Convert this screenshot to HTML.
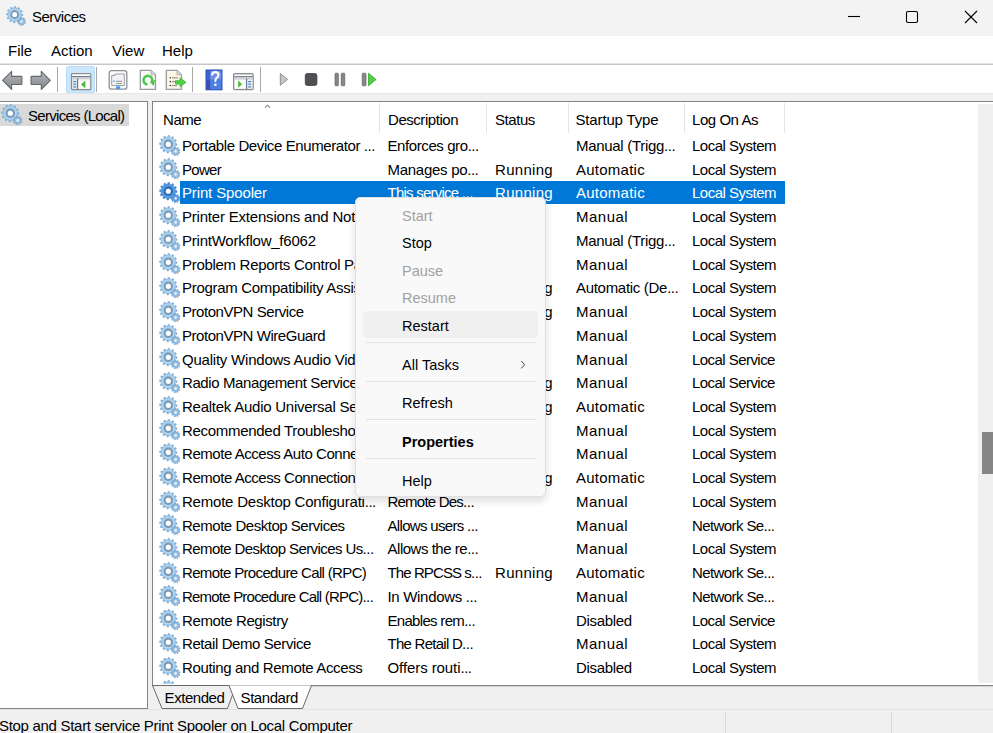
<!DOCTYPE html>
<html><head><meta charset="utf-8"><style>
*{margin:0;padding:0;box-sizing:border-box}
html,body{width:993px;height:733px;overflow:hidden;background:#f0f0f0;font-family:"Liberation Sans",sans-serif;color:#000}
.a{position:absolute}
#title{left:0;top:0;width:993px;height:36px;background:#f3f3f3}
#menubar{left:0;top:36px;width:993px;height:27px;background:#fff}
#menubar span{position:absolute;top:0px;font-size:15px;line-height:29px}
#tbline{left:0;top:63px;width:993px;height:2px;background:#c6c6c6;border-top:1px solid #e2e2e2}
#toolbar{left:0;top:65px;width:993px;height:28px;background:#fff}
.sep{position:absolute;top:2px;width:1px;height:25px;background:#a0a0a0}
#left{left:0;top:101px;width:148px;height:608px;background:#fff;border-top:1px solid #7e848c;border-right:1px solid #7e848c;border-bottom:1px solid #7e848c;box-shadow:0 1px 0 #d4d4d4}
#right{left:152px;top:101px;width:841px;height:585px;background:#fff;border-top:1px solid #7e848c;border-left:1px solid #7e848c;border-bottom:1px solid #7e848c;overflow:hidden;box-shadow:0 1px 0 #d4d4d4}
.row{position:absolute;left:0;width:993px;height:23.73px;font-size:15px;letter-spacing:-0.45px;line-height:23.73px;white-space:nowrap}
.row .c{position:absolute;top:0}
.row.sel{color:#fff}
.row .run{letter-spacing:0.3px}
.el{letter-spacing:-0.5px}
.row .selbg{position:absolute;left:180px;top:0;width:605px;height:23px;background:#0078d7}
svg.g{position:absolute;overflow:visible}
#list{position:absolute;left:0;top:0;width:993px;height:733px;overflow:hidden;clip-path:polygon(153px 102px,978px 102px,978px 684px,153px 684px)}
.hdr{position:absolute;top:104.5px;font-size:15px;letter-spacing:-0.45px;line-height:30px}
.cdiv{position:absolute;top:103px;width:1px;height:30px;background:#e5e5e5}
#scroll{left:978px;top:104px;width:15px;height:579px;background:#f0f0f0}
#thumb{left:982px;top:432px;width:11px;height:42px;background:#858585}
#status{left:0;top:709px;width:993px;height:24px;background:#f0f0f0;border-top:1px solid #e3e3e3}
#menu{left:355px;top:197px;width:191px;height:299.5px;background:#f9f9f9;border:1px solid #e0e0e0;border-radius:5px;box-shadow:0 4px 9px rgba(0,0,0,0.14)}
#menu .mi{position:absolute;left:46px;font-size:14.5px;line-height:20px;white-space:nowrap}
#menu .dis{color:#a2a2a2}
#menu .msep{position:absolute;left:10px;width:170px;height:1px;background:#e3e3e3}
</style></head><body>
<svg width="0" height="0" style="position:absolute">
<defs>
<radialGradient id="gb" cx="10.3" cy="9.2" r="8.8" gradientUnits="userSpaceOnUse"><stop offset="0" stop-color="#e2f2fd"/><stop offset="0.45" stop-color="#cbe6fa"/><stop offset="0.75" stop-color="#9ecbee"/><stop offset="1" stop-color="#6f9fcc"/></radialGradient>
<radialGradient id="gbs" cx="10.3" cy="9.2" r="8.8" gradientUnits="userSpaceOnUse"><stop offset="0" stop-color="#7cb8ee"/><stop offset="0.6" stop-color="#5aa0e6"/><stop offset="1" stop-color="#3a80d0"/></radialGradient>
<g id="gear"><path d="M17.46,8.48 L19.09,8.87 L19.00,10.53 L17.34,10.73 L16.86,12.16 L18.08,13.31 L17.17,14.70 L15.63,14.04 L14.50,15.04 L14.98,16.65 L13.50,17.40 L12.49,16.06 L11.02,16.36 L10.63,17.99 L8.97,17.90 L8.77,16.24 L7.34,15.76 L6.19,16.98 L4.80,16.07 L5.46,14.53 L4.46,13.40 L2.85,13.88 L2.10,12.40 L3.44,11.39 L3.14,9.92 L1.51,9.53 L1.60,7.87 L3.26,7.67 L3.74,6.24 L2.52,5.09 L3.43,3.70 L4.97,4.36 L6.10,3.36 L5.62,1.75 L7.10,1.00 L8.11,2.34 L9.58,2.04 L9.97,0.41 L11.63,0.50 L11.83,2.16 L13.26,2.64 L14.41,1.42 L15.80,2.33 L15.14,3.87 L16.14,5.00 L17.75,4.52 L18.50,6.00 L17.16,7.01Z" fill="url(#gb)" stroke="#7fa9d0" stroke-width="0.4"/><circle cx="10.3" cy="9.2" r="3.7" fill="none" stroke="#7d9bb8" stroke-width="2.3"/><circle cx="10.3" cy="9.2" r="2.5" fill="#fff"/><path d="M20.88,17.06 L21.87,17.63 L21.43,18.64 L20.34,18.31 L19.71,18.98 L20.09,20.06 L19.11,20.55 L18.48,19.59 L17.57,19.70 L17.17,20.77 L16.10,20.52 L16.23,19.38 L15.47,18.87 L14.47,19.44 L13.81,18.56 L14.65,17.77 L14.39,16.89 L13.26,16.69 L13.33,15.59 L14.47,15.52 L14.84,14.68 L14.10,13.80 L14.86,13.00 L15.78,13.68 L16.60,13.27 L16.60,12.13 L17.70,12.00 L17.96,13.11 L18.86,13.33 L19.60,12.45 L20.52,13.06 L20.00,14.09 L20.55,14.82 L21.68,14.63 L21.99,15.69 L20.94,16.14Z" fill="#95bde0" stroke="#6d98c0" stroke-width="0.6"/><circle cx="17.65" cy="16.4" r="1.3" fill="#e8f3fb"/></g>
<g id="gears"><path d="M17.46,8.48 L19.09,8.87 L19.00,10.53 L17.34,10.73 L16.86,12.16 L18.08,13.31 L17.17,14.70 L15.63,14.04 L14.50,15.04 L14.98,16.65 L13.50,17.40 L12.49,16.06 L11.02,16.36 L10.63,17.99 L8.97,17.90 L8.77,16.24 L7.34,15.76 L6.19,16.98 L4.80,16.07 L5.46,14.53 L4.46,13.40 L2.85,13.88 L2.10,12.40 L3.44,11.39 L3.14,9.92 L1.51,9.53 L1.60,7.87 L3.26,7.67 L3.74,6.24 L2.52,5.09 L3.43,3.70 L4.97,4.36 L6.10,3.36 L5.62,1.75 L7.10,1.00 L8.11,2.34 L9.58,2.04 L9.97,0.41 L11.63,0.50 L11.83,2.16 L13.26,2.64 L14.41,1.42 L15.80,2.33 L15.14,3.87 L16.14,5.00 L17.75,4.52 L18.50,6.00 L17.16,7.01Z" fill="url(#gbs)" stroke="#3d7fcc" stroke-width="0.4"/><circle cx="10.3" cy="9.2" r="3.7" fill="none" stroke="#2f6cb8" stroke-width="2.3"/><circle cx="10.3" cy="9.2" r="2.5" fill="#fff"/><path d="M20.88,17.06 L21.87,17.63 L21.43,18.64 L20.34,18.31 L19.71,18.98 L20.09,20.06 L19.11,20.55 L18.48,19.59 L17.57,19.70 L17.17,20.77 L16.10,20.52 L16.23,19.38 L15.47,18.87 L14.47,19.44 L13.81,18.56 L14.65,17.77 L14.39,16.89 L13.26,16.69 L13.33,15.59 L14.47,15.52 L14.84,14.68 L14.10,13.80 L14.86,13.00 L15.78,13.68 L16.60,13.27 L16.60,12.13 L17.70,12.00 L17.96,13.11 L18.86,13.33 L19.60,12.45 L20.52,13.06 L20.00,14.09 L20.55,14.82 L21.68,14.63 L21.99,15.69 L20.94,16.14Z" fill="#5b9de0" stroke="#3a7cc8" stroke-width="0.4"/><circle cx="17.65" cy="16.4" r="1.3" fill="#cfe5fa"/></g>
</defs></svg>

<div id="title" class="a">
 <svg class="g" style="left:5.2px;top:5.6px;width:18.8px;height:18.8px" viewBox="0 0 20 20"><use href="#gear"/></svg>
 <span class="a" style="left:32px;top:0;font-size:15px;letter-spacing:-0.5px;line-height:34px">Services</span>
 <svg class="a" style="left:840px;top:0" width="153" height="35">
  <line x1="8" y1="16.5" x2="20" y2="16.5" stroke="#000" stroke-width="1.1"/>
  <rect x="66.5" y="11.5" width="11" height="11" rx="1.5" fill="none" stroke="#000" stroke-width="1.1"/>
  <path d="M125,11 L137,23 M137,11 L125,23" stroke="#000" stroke-width="1.1"/>
 </svg>
</div>
<div id="menubar" class="a">
 <span style="left:8px">File</span><span style="left:51px">Action</span><span style="left:112px">View</span><span style="left:162px">Help</span>
</div>
<div id="tbline" class="a"></div>
<div id="toolbar" class="a">
<div class="a" style="left:0;top:28px;width:993px;height:1px;background:#e8e8e8"></div>
<svg class="a" style="left:0;top:0" width="400" height="28" viewBox="0 0 400 28">
 <defs>
  <linearGradient id="ag" x1="0" y1="0" x2="0" y2="1"><stop offset="0" stop-color="#b9bcc0"/><stop offset="0.5" stop-color="#9a9da1"/><stop offset="1" stop-color="#85888c"/></linearGradient>
 </defs>
 <path d="M2.6,15.3 L11.6,6.4 L11.6,11.4 L21.2,11.4 Q21.9,11.4 21.9,12.1 L21.9,18.9 Q21.9,19.5 21.2,19.5 L11.6,19.5 L11.6,24.4 Z" fill="url(#ag)" stroke="#646668" stroke-width="1.1" stroke-linejoin="round"/>
 <path d="M50.3,15.3 L41.3,6.4 L41.3,11.4 L31.7,11.4 Q31,11.4 31,12.1 L31,18.9 Q31,19.5 31.7,19.5 L41.3,19.5 L41.3,24.4 Z" fill="url(#ag)" stroke="#646668" stroke-width="1.1" stroke-linejoin="round"/>
 <rect x="57" y="2" width="1" height="25" fill="#a8a8a8"/>
 <rect x="66.5" y="1.5" width="28" height="26.5" rx="2" fill="#cce6fa" stroke="#b3dbf7" stroke-width="1"/>
 <g transform="translate(71,8)">
  <rect x="0.5" y="0.5" width="19.3" height="16.2" rx="1" fill="#e8e8e8" stroke="#8a8c90" stroke-width="1.2"/>
  <rect x="1.5" y="1.8" width="17.5" height="1.2" fill="#fafafa"/>
  <rect x="1.2" y="3.1" width="18" height="1.1" fill="#5e6f84"/>
  <rect x="1.2" y="4.2" width="18" height="2.2" fill="#cdd0d4"/>
  <rect x="6" y="5.5" width="1.3" height="10.7" fill="#6c7c90"/>
  <rect x="7.5" y="6.6" width="11.3" height="9.2" fill="#fafafa"/>
  <rect x="1.6" y="6.6" width="4.2" height="9.2" fill="#e6e8ea"/>
  <rect x="2.2" y="8" width="3.1" height="1.3" rx="0.6" fill="#4a86c8"/>
  <rect x="2.2" y="10.6" width="3.1" height="1.3" rx="0.6" fill="#6a9ad0"/>
  <rect x="2.2" y="13.2" width="3.1" height="1.3" rx="0.6" fill="#4a86c8"/>
  <path d="M10,11.5 L14.3,7.6 L14.3,15.2 Z" fill="#48b838"/>
 </g>
 <rect x="96" y="2" width="1" height="25" fill="#a8a8a8"/>
 <g transform="translate(108.5,5)">
  <rect x="0.7" y="0.7" width="17.6" height="18.5" rx="2.2" fill="#fbfbfb" stroke="#8a8f96" stroke-width="1.3"/>
  <rect x="3" y="10.2" width="13" height="0" fill="none"/>
  <path d="M3.2,5.5 L6.5,5.5 L6.5,4 L15.8,4 L15.8,15.5 L3.2,15.5 Z" fill="#f4f4f4" stroke="#9a9ea4" stroke-width="1"/>
  <rect x="4.6" y="10.6" width="1.8" height="1.3" rx="0.6" fill="#3b9be8"/>
  <rect x="7.6" y="10.8" width="6" height="1" fill="#8a8a8a"/>
  <rect x="7.6" y="13" width="6" height="1" fill="#9a9a9a"/>
  <rect x="7.5" y="16.3" width="4.3" height="2.6" rx="1" fill="#3d9cf0"/>
 </g>
 <g transform="translate(139.5,4.5)">
  <path d="M0.8,0.8 L11.5,0.8 L16,5.3 L16,19.8 L0.8,19.8 Z" fill="#fafafa" stroke="#9a9c9e" stroke-width="1.3"/>
  <path d="M11.5,0.8 L11.5,5.3 L16,5.3" fill="#d8d8d8" stroke="#a8a8a8" stroke-width="0.8"/>
  <path d="M12.4,12.6 A4.4,4.4 0 1 0 7.9,15.1" fill="none" stroke="#4cc544" stroke-width="2.5"/>
  <path d="M10.2,12.2 L15.6,10.6 L14.2,16.6 Z" fill="#4cc544"/>
 </g>
 <g transform="translate(165.5,4.5)">
  <path d="M0.8,0.8 L11.5,0.8 L16,5.3 L16,19.8 L0.8,19.8 Z" fill="#fcf6e2" stroke="#9a9c9e" stroke-width="1.3"/>
  <path d="M11.5,0.8 L11.5,5.3 L16,5.3" fill="#d8d8d8" stroke="#a8a8a8" stroke-width="0.8"/>
  <circle cx="4.8" cy="8.3" r="0.8" fill="#333"/><circle cx="4.8" cy="12.1" r="0.8" fill="#333"/><circle cx="4.8" cy="16" r="0.8" fill="#333"/>
  <rect x="6.5" y="7.8" width="6" height="1.1" fill="#8c8f96"/><rect x="6.5" y="11.6" width="5" height="1.1" fill="#8c8f96"/><rect x="6.5" y="15.5" width="5" height="1.1" fill="#8c8f96"/>
  <path d="M10,11.2 L14.5,11.2 L14.5,8.4 L20.5,12.8 L14.5,17.2 L14.5,14.6 L10,14.6 Z" fill="#52d04a" stroke="#3cb534" stroke-width="0.8" stroke-linejoin="round"/>
 </g>
 <rect x="192" y="2" width="1" height="25" fill="#a8a8a8"/>
 <g transform="translate(205.5,4.5)">
  <rect x="0.5" y="0.5" width="16" height="19.8" fill="#3b62d6" stroke="#2f4fb8" stroke-width="1"/>
  <rect x="4.6" y="1.3" width="11.2" height="9" fill="#6f8ee6"/>
  <rect x="4.6" y="10.3" width="11.2" height="9.2" fill="#4a7fe0"/>
  <rect x="1" y="11" width="3.5" height="9" fill="#3e4ea8"/>
  <path d="M6.6,5.2 Q7,2.6 10,2.6 Q13,2.6 13,5.4 Q13,7.2 11.2,8.4 Q9.9,9.3 9.9,11.5" fill="none" stroke="#fff" stroke-width="2.1" stroke-linecap="round"/>
  <circle cx="9.9" cy="15.2" r="1.3" fill="#fff"/>
 </g>
 <g transform="translate(233,8)">
  <rect x="0.6" y="0.6" width="19.6" height="16" rx="1" fill="#e6e6e6" stroke="#8a8c90" stroke-width="1.2"/>
  <rect x="1.6" y="1.9" width="17.5" height="1.2" fill="#fafafa"/>
  <rect x="1.2" y="3.2" width="18.5" height="1.1" fill="#5e6f84"/>
  <rect x="1.2" y="4.3" width="18.5" height="2.2" fill="#cdd0d4"/>
  <rect x="13" y="5.5" width="1.3" height="10.7" fill="#6c7c90"/>
  <rect x="1.8" y="6.8" width="10.8" height="8.8" fill="#fafafa"/>
  <rect x="14.5" y="6.8" width="4.8" height="8.8" fill="#f2f2f2"/>
  <rect x="15" y="8" width="3.3" height="1.3" rx="0.6" fill="#4a86c8"/>
  <rect x="15" y="10.6" width="3.3" height="1.3" rx="0.6" fill="#6a9ad0"/>
  <rect x="15" y="13.2" width="3.3" height="1.3" rx="0.6" fill="#4a86c8"/>
  <path d="M5.2,7.6 L9,11.2 L5.2,14.8 Z" fill="#48b838"/>
 </g>
 <rect x="260" y="2" width="1" height="25" fill="#a8a8a8"/>
 <path d="M280.3,8.6 L287.6,14.4 L280.3,20.3 Z" fill="#c4c6c8" stroke="#8c8e90" stroke-width="1" stroke-linejoin="round"/>
 <rect x="305.3" y="8.6" width="11.6" height="11.8" rx="2" fill="#4e5054" stroke="#3a3a3a" stroke-width="0.8"/>
 <rect x="335" y="8.2" width="3.4" height="12.6" rx="0.8" fill="#85878b" stroke="#626466" stroke-width="0.7"/>
 <rect x="341.2" y="8.2" width="3.6" height="12.6" rx="0.8" fill="#85878b" stroke="#626466" stroke-width="0.7"/>
 <rect x="362.2" y="8.2" width="3.8" height="12.6" rx="0.8" fill="#85878b" stroke="#626466" stroke-width="0.7"/>
 <path d="M368.5,8.2 L376,14.5 L368.5,20.8 Z" fill="#55cc48" stroke="#3ab030" stroke-width="0.9" stroke-linejoin="round"/>
</svg>
</div>

<div id="left" class="a">
 <div class="a" style="left:0;top:2px;width:129px;height:22px;background:#d9d9d9"></div>
 <svg class="g" style="left:0px;top:2.2px;width:20px;height:20px" viewBox="0 0 20 20"><use href="#gear"/></svg>
 <span class="a" style="left:28px;top:2px;font-size:15px;letter-spacing:-0.7px;line-height:23px">Services (Local)</span>
</div>
<div id="right" class="a"></div>

<div id="list">
<span class="hdr" style="left:163px">Name</span>
<span class="hdr" style="left:388px">Description</span>
<span class="hdr" style="left:495px">Status</span>
<span class="hdr" style="left:575.5px;letter-spacing:-0.15px">Startup Type</span>
<span class="hdr" style="left:692px">Log On As</span>
<div class="cdiv" style="left:379px"></div><div class="cdiv" style="left:486px"></div><div class="cdiv" style="left:568px"></div><div class="cdiv" style="left:684px"></div><div class="cdiv" style="left:784px"></div>
<svg class="a" style="left:262px;top:103px" width="12" height="8"><path d="M3,4.6 L5.5,2.2 L8,4.6" fill="none" stroke="#858585" stroke-width="1.1"/></svg>
<div class="row" style="top:134.00px"><svg class="g" style="left:158px;top:0.6px;width:20px;height:20px" viewBox="0 0 20 20"><use href="#gear"/></svg><span class="c" style="left:182px;letter-spacing:-0.40px">Portable Device Enumerator <span class="el">...</span></span><span class="c" style="left:387.5px;letter-spacing:-0.41px">Enforces gro<span class="el">...</span></span><span class="c" style="left:576px;letter-spacing:-0.30px">Manual (Trigg<span class="el">...</span></span><span class="c" style="left:692px;letter-spacing:-0.50px">Local System</span></div>
<div class="row" style="top:157.73px"><svg class="g" style="left:158px;top:0.6px;width:20px;height:20px" viewBox="0 0 20 20"><use href="#gear"/></svg><span class="c" style="left:182px;letter-spacing:-0.70px">Power</span><span class="c" style="left:387.5px;letter-spacing:-0.28px">Manages po<span class="el">...</span></span><span class="c run" style="left:495px">Running</span><span class="c" style="left:576px;letter-spacing:0.25px">Automatic</span><span class="c" style="left:692px;letter-spacing:-0.50px">Local System</span></div>
<div class="row sel" style="top:181.46px"><svg class="g" style="left:158px;top:0.6px;width:20px;height:20px" viewBox="0 0 20 20"><use href="#gears"/></svg><div class="selbg"></div><span class="c" style="left:182px;letter-spacing:-0.14px">Print Spooler</span><span class="c" style="left:387.5px;letter-spacing:-0.76px">This service <span class="el">...</span></span><span class="c run" style="left:495px">Running</span><span class="c" style="left:576px;letter-spacing:0.25px">Automatic</span><span class="c" style="left:692px;letter-spacing:-0.50px">Local System</span></div>
<div class="row" style="top:205.19px"><svg class="g" style="left:158px;top:0.6px;width:20px;height:20px" viewBox="0 0 20 20"><use href="#gear"/></svg><span class="c" style="left:182px;letter-spacing:-0.20px">Printer Extensions and Notif<span class="el">...</span></span><span class="c" style="left:387.5px">Printer Exte<span class="el">...</span></span><span class="c" style="left:576px;letter-spacing:0.50px">Manual</span><span class="c" style="left:692px;letter-spacing:-0.50px">Local System</span></div>
<div class="row" style="top:228.92px"><svg class="g" style="left:158px;top:0.6px;width:20px;height:20px" viewBox="0 0 20 20"><use href="#gear"/></svg><span class="c" style="left:182px;letter-spacing:-0.23px">PrintWorkflow_f6062</span><span class="c" style="left:387.5px">Provides su<span class="el">...</span></span><span class="c" style="left:576px;letter-spacing:-0.30px">Manual (Trigg<span class="el">...</span></span><span class="c" style="left:692px;letter-spacing:-0.50px">Local System</span></div>
<div class="row" style="top:252.65px"><svg class="g" style="left:158px;top:0.6px;width:20px;height:20px" viewBox="0 0 20 20"><use href="#gear"/></svg><span class="c" style="left:182px;letter-spacing:-0.30px">Problem Reports Control Pan<span class="el">...</span></span><span class="c" style="left:387.5px">This service <span class="el">...</span></span><span class="c" style="left:576px;letter-spacing:0.50px">Manual</span><span class="c" style="left:692px;letter-spacing:-0.50px">Local System</span></div>
<div class="row" style="top:276.38px"><svg class="g" style="left:158px;top:0.6px;width:20px;height:20px" viewBox="0 0 20 20"><use href="#gear"/></svg><span class="c" style="left:182px;letter-spacing:-0.30px">Program Compatibility Assist<span class="el">...</span></span><span class="c" style="left:387.5px">This service <span class="el">...</span></span><span class="c run" style="left:495px">Running</span><span class="c" style="left:576px;letter-spacing:-0.30px">Automatic (De<span class="el">...</span></span><span class="c" style="left:692px;letter-spacing:-0.50px">Local System</span></div>
<div class="row" style="top:300.11px"><svg class="g" style="left:158px;top:0.6px;width:20px;height:20px" viewBox="0 0 20 20"><use href="#gear"/></svg><span class="c" style="left:182px">ProtonVPN Service</span><span class="c" style="left:387.5px">ProtonVPN <span class="el">...</span></span><span class="c run" style="left:495px">Running</span><span class="c" style="left:576px;letter-spacing:0.50px">Manual</span><span class="c" style="left:692px;letter-spacing:-0.50px">Local System</span></div>
<div class="row" style="top:323.84px"><svg class="g" style="left:158px;top:0.6px;width:20px;height:20px" viewBox="0 0 20 20"><use href="#gear"/></svg><span class="c" style="left:182px">ProtonVPN WireGuard</span><span class="c" style="left:387.5px">ProtonVPN <span class="el">...</span></span><span class="c" style="left:576px;letter-spacing:0.50px">Manual</span><span class="c" style="left:692px;letter-spacing:-0.50px">Local System</span></div>
<div class="row" style="top:347.57px"><svg class="g" style="left:158px;top:0.6px;width:20px;height:20px" viewBox="0 0 20 20"><use href="#gear"/></svg><span class="c" style="left:182px;letter-spacing:-0.22px">Quality Windows Audio Video<span class="el">...</span></span><span class="c" style="left:387.5px">Quality Win<span class="el">...</span></span><span class="c" style="left:576px;letter-spacing:0.50px">Manual</span><span class="c" style="left:692px;letter-spacing:-0.55px">Local Service</span></div>
<div class="row" style="top:371.30px"><svg class="g" style="left:158px;top:0.6px;width:20px;height:20px" viewBox="0 0 20 20"><use href="#gear"/></svg><span class="c" style="left:182px;letter-spacing:-0.40px">Radio Management Service</span><span class="c" style="left:387.5px">Radio Mana<span class="el">...</span></span><span class="c run" style="left:495px">Running</span><span class="c" style="left:576px;letter-spacing:0.50px">Manual</span><span class="c" style="left:692px;letter-spacing:-0.55px">Local Service</span></div>
<div class="row" style="top:395.03px"><svg class="g" style="left:158px;top:0.6px;width:20px;height:20px" viewBox="0 0 20 20"><use href="#gear"/></svg><span class="c" style="left:182px;letter-spacing:-0.25px">Realtek Audio Universal Serv<span class="el">...</span></span><span class="c" style="left:387.5px">Realtek Aud<span class="el">...</span></span><span class="c run" style="left:495px">Running</span><span class="c" style="left:576px;letter-spacing:0.25px">Automatic</span><span class="c" style="left:692px;letter-spacing:-0.50px">Local System</span></div>
<div class="row" style="top:418.76px"><svg class="g" style="left:158px;top:0.6px;width:20px;height:20px" viewBox="0 0 20 20"><use href="#gear"/></svg><span class="c" style="left:182px;letter-spacing:-0.30px">Recommended Troubleshooti<span class="el">...</span></span><span class="c" style="left:387.5px">Enables aut<span class="el">...</span></span><span class="c" style="left:576px;letter-spacing:0.50px">Manual</span><span class="c" style="left:692px;letter-spacing:-0.50px">Local System</span></div>
<div class="row" style="top:442.49px"><svg class="g" style="left:158px;top:0.6px;width:20px;height:20px" viewBox="0 0 20 20"><use href="#gear"/></svg><span class="c" style="left:182px">Remote Access Auto Connect<span class="el">...</span></span><span class="c" style="left:387.5px">Creates a co<span class="el">...</span></span><span class="c" style="left:576px;letter-spacing:0.50px">Manual</span><span class="c" style="left:692px;letter-spacing:-0.50px">Local System</span></div>
<div class="row" style="top:466.22px"><svg class="g" style="left:158px;top:0.6px;width:20px;height:20px" viewBox="0 0 20 20"><use href="#gear"/></svg><span class="c" style="left:182px">Remote Access Connection <span class="el">...</span></span><span class="c" style="left:387.5px">Manages di<span class="el">...</span></span><span class="c run" style="left:495px">Running</span><span class="c" style="left:576px;letter-spacing:0.25px">Automatic</span><span class="c" style="left:692px;letter-spacing:-0.50px">Local System</span></div>
<div class="row" style="top:489.95px"><svg class="g" style="left:158px;top:0.6px;width:20px;height:20px" viewBox="0 0 20 20"><use href="#gear"/></svg><span class="c" style="left:182px;letter-spacing:-0.22px">Remote Desktop Configurati<span class="el">...</span></span><span class="c" style="left:387.5px;letter-spacing:-0.78px">Remote Des<span class="el">...</span></span><span class="c" style="left:576px;letter-spacing:0.50px">Manual</span><span class="c" style="left:692px;letter-spacing:-0.50px">Local System</span></div>
<div class="row" style="top:513.68px"><svg class="g" style="left:158px;top:0.6px;width:20px;height:20px" viewBox="0 0 20 20"><use href="#gear"/></svg><span class="c" style="left:182px;letter-spacing:-0.47px">Remote Desktop Services</span><span class="c" style="left:387.5px;letter-spacing:-0.68px">Allows users <span class="el">...</span></span><span class="c" style="left:576px;letter-spacing:0.50px">Manual</span><span class="c" style="left:692px;letter-spacing:-0.60px">Network Se<span class="el">...</span></span></div>
<div class="row" style="top:537.41px"><svg class="g" style="left:158px;top:0.6px;width:20px;height:20px" viewBox="0 0 20 20"><use href="#gear"/></svg><span class="c" style="left:182px;letter-spacing:-0.59px">Remote Desktop Services Us<span class="el">...</span></span><span class="c" style="left:387.5px;letter-spacing:-0.48px">Allows the re<span class="el">...</span></span><span class="c" style="left:576px;letter-spacing:0.50px">Manual</span><span class="c" style="left:692px;letter-spacing:-0.50px">Local System</span></div>
<div class="row" style="top:561.14px"><svg class="g" style="left:158px;top:0.6px;width:20px;height:20px" viewBox="0 0 20 20"><use href="#gear"/></svg><span class="c" style="left:182px;letter-spacing:-0.65px">Remote Procedure Call (RPC)</span><span class="c" style="left:387.5px;letter-spacing:-0.90px">The RPCSS s<span class="el">...</span></span><span class="c run" style="left:495px">Running</span><span class="c" style="left:576px;letter-spacing:0.25px">Automatic</span><span class="c" style="left:692px;letter-spacing:-0.60px">Network Se<span class="el">...</span></span></div>
<div class="row" style="top:584.87px"><svg class="g" style="left:158px;top:0.6px;width:20px;height:20px" viewBox="0 0 20 20"><use href="#gear"/></svg><span class="c" style="left:182px;letter-spacing:-0.79px">Remote Procedure Call (RPC)<span class="el">...</span></span><span class="c" style="left:387.5px;letter-spacing:-0.31px">In Windows <span class="el">...</span></span><span class="c" style="left:576px;letter-spacing:0.50px">Manual</span><span class="c" style="left:692px;letter-spacing:-0.60px">Network Se<span class="el">...</span></span></div>
<div class="row" style="top:608.60px"><svg class="g" style="left:158px;top:0.6px;width:20px;height:20px" viewBox="0 0 20 20"><use href="#gear"/></svg><span class="c" style="left:182px;letter-spacing:-0.39px">Remote Registry</span><span class="c" style="left:387.5px;letter-spacing:-0.69px">Enables rem<span class="el">...</span></span><span class="c" style="left:576px;letter-spacing:-0.33px">Disabled</span><span class="c" style="left:692px;letter-spacing:-0.55px">Local Service</span></div>
<div class="row" style="top:632.33px"><svg class="g" style="left:158px;top:0.6px;width:20px;height:20px" viewBox="0 0 20 20"><use href="#gear"/></svg><span class="c" style="left:182px;letter-spacing:-0.41px">Retail Demo Service</span><span class="c" style="left:387.5px;letter-spacing:-0.73px">The Retail D<span class="el">...</span></span><span class="c" style="left:576px;letter-spacing:0.50px">Manual</span><span class="c" style="left:692px;letter-spacing:-0.50px">Local System</span></div>
<div class="row" style="top:656.06px"><svg class="g" style="left:158px;top:0.6px;width:20px;height:20px" viewBox="0 0 20 20"><use href="#gear"/></svg><span class="c" style="left:182px;letter-spacing:-0.35px">Routing and Remote Access</span><span class="c" style="left:387.5px;letter-spacing:-0.08px">Offers routi<span class="el">...</span></span><span class="c" style="left:576px;letter-spacing:-0.33px">Disabled</span><span class="c" style="left:692px;letter-spacing:-0.50px">Local System</span></div>
<div class="row" style="top:679.79px"><svg class="g" style="left:158px;top:0.6px;width:20px;height:20px" viewBox="0 0 20 20"><use href="#gear"/></svg><span class="c" style="left:182px">Secondary Logon</span><span class="c" style="left:387.5px">Enables star<span class="el">...</span></span><span class="c" style="left:576px;letter-spacing:0.50px">Manual</span><span class="c" style="left:692px;letter-spacing:-0.50px">Local System</span></div>
</div>
<svg class="a" style="left:148px;top:684px" width="200" height="26" viewBox="0 0 200 26">
 <path d="M4.5,1.5 L14,24.5 L79.5,24.5 L88,1.5 Z" fill="#f0f0f0" stroke="#6a6a6a" stroke-width="1"/>
 <path d="M81,1.5 L90,24.5 L154.5,24.5 L163.5,1.5 Z" fill="#fff" stroke="#6a6a6a" stroke-width="1"/>
 <rect x="81.5" y="0" width="81.5" height="1.6" fill="#fff"/>
 <text x="16.6" y="18.7" font-family="Liberation Sans" font-size="15" letter-spacing="-0.45" fill="#000">Extended</text>
 <text x="92.6" y="18.7" font-family="Liberation Sans" font-size="15" letter-spacing="-0.45" fill="#000">Standard</text>
</svg>
<div id="scroll" class="a"></div>
<div id="thumb" class="a"></div>

<div id="status" class="a">
 <span class="a" style="left:-1px;top:4px;font-size:15px;letter-spacing:-0.3px;line-height:24px;white-space:nowrap">Stop and Start service Print Spooler on Local Computer</span>
 <div class="a" style="left:725px;top:2px;width:1px;height:22px;background:#dadada"></div>
 <div class="a" style="left:891px;top:2px;width:1px;height:22px;background:#dadada"></div>
</div>

<div id="menu" class="a">
 <span class="mi dis" style="top:8px">Start</span>
 <span class="mi" style="top:35px">Stop</span>
 <span class="mi dis" style="top:63px">Pause</span>
 <span class="mi dis" style="top:90px">Resume</span>
 <div class="a" style="left:7px;top:113px;width:175px;height:27px;background:#f0f0f0;border-radius:4px"></div>
 <span class="mi" style="top:118px">Restart</span>
 <div class="msep" style="top:144px"></div>
 <span class="mi" style="top:157px">All Tasks</span>
 <svg class="a" style="left:162.5px;top:160.5px" width="8" height="12"><path d="M2.2,2 L5.7,5.7 L2.2,9.4" fill="none" stroke="#444" stroke-width="1"/></svg>
 <div class="msep" style="top:182.5px"></div>
 <span class="mi" style="top:195px">Refresh</span>
 <div class="msep" style="top:221px"></div>
 <span class="mi" style="top:234px;font-weight:bold">Properties</span>
 <div class="msep" style="top:260px"></div>
 <span class="mi" style="top:273px">Help</span>
</div>
</body></html>
